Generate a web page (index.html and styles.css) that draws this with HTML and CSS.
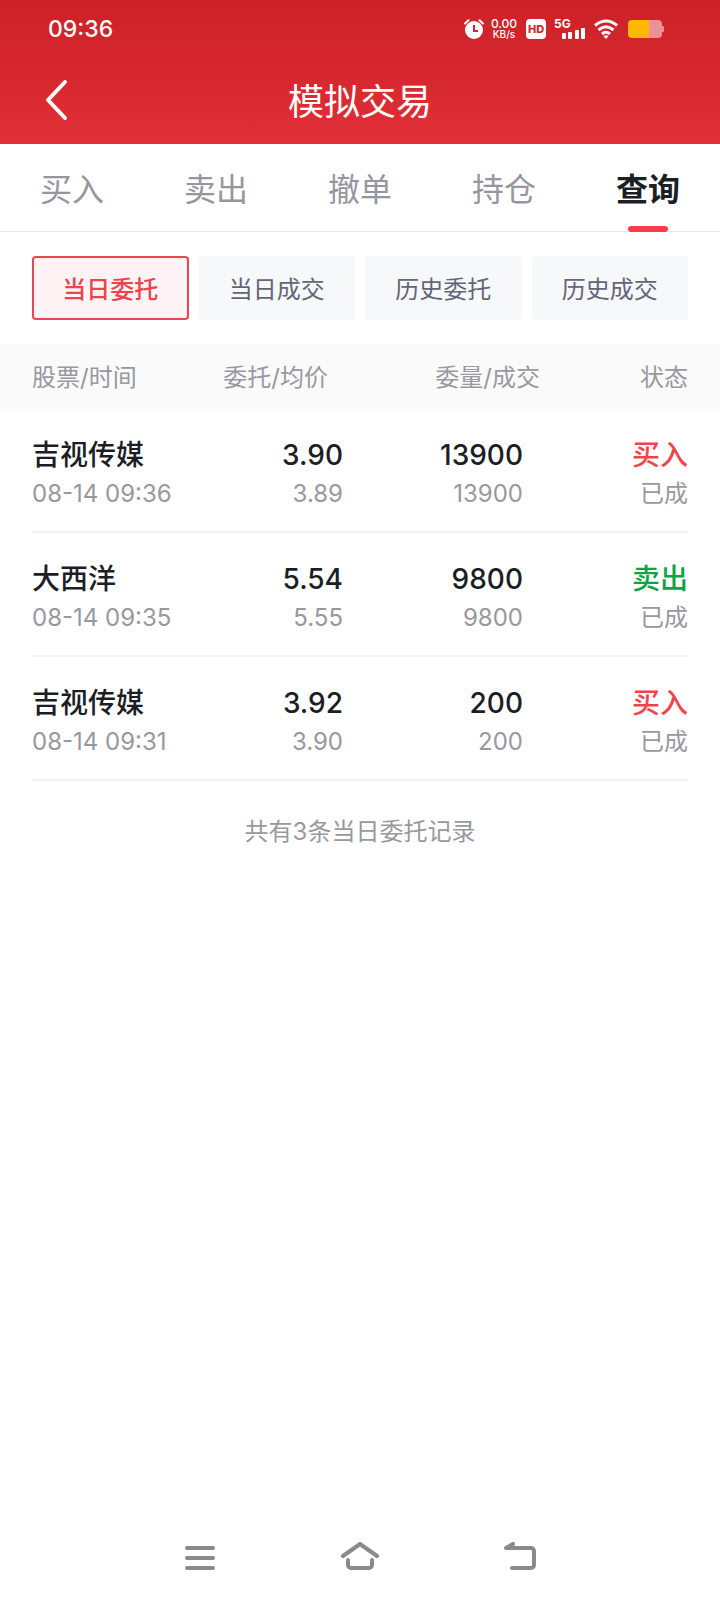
FILE: index.html
```html
<!DOCTYPE html>
<html lang="zh-CN">
<head>
<meta charset="utf-8">
<meta name="viewport" content="width=device-width, initial-scale=1">
<title>模拟交易</title>
<link rel="stylesheet" href="styles.css">
</head>
<body>
<div class="app">
  <header class="header">
    <div class="status-bar">
      <time class="clock">09:36</time>
      <div class="indicators">
        <svg width="20" height="20" viewBox="0 0 20 20" aria-hidden="true">
          <circle cx="10" cy="11" r="9" fill="#fff"/>
          <path d="M1 4.5L4.5 1.2M19 4.5L15.500 1.200" stroke="#fff" stroke-width="2" stroke-linecap="round"/>
          <path d="M10 6v6h4" fill="none" stroke="#d22730" stroke-width="2"/>
        </svg>
        <div class="speed"><span class="speed-value">0.00</span><span class="speed-unit">KB/s</span></div>
        <span class="hd">HD</span>
        <div class="signal">
          <span class="network">5G</span>
          <svg class="bars" width="24" height="12" viewBox="0 0 24 12" fill="#fff" aria-hidden="true">
            <rect x="0" y="6" width="4" height="6" rx="1"/><rect x="6" y="5" width="4" height="7" rx="1"/><rect x="13" y="3" width="4" height="9" rx="1"/><rect x="19" y="1" width="4" height="11" rx="1"/>
          </svg>
        </div>
        <svg class="wifi" width="24" height="20" viewBox="0 0 24 20" fill="none" stroke="#fff" stroke-width="3" aria-hidden="true">
          <path d="M1 6.500Q12-2.500 23 6.500M4.500 11Q12 4.500 19.500 11M8 15Q12 11.500 16 15"/>
          <path d="M9.500 17Q12 15.500 14.500 17L12 20z" fill="#fff" stroke="none"/>
        </svg>
        <svg class="battery" width="36" height="18" viewBox="0 0 36 18" aria-hidden="true">
          <path d="M21 0h9a4 4 0 0 1 4 4v2h1a1 1 0 0 1 1 1v4a1 1 0 0 1-1 1h-1v2a4 4 0 0 1-4 4h-9z" fill="#ea929a"/>
          <path d="M4 0h17v18H4a4 4 0 0 1-4-4V4a4 4 0 0 1 4-4z" fill="#ffb800"/>
        </svg>
      </div>
    </div>
    <div class="title-bar">
      <button class="back" type="button" aria-label="返回">
        <svg width="24" height="42" viewBox="0 0 24 42" fill="none" stroke="#fff" stroke-width="4" stroke-linecap="round" stroke-linejoin="round"><path d="M21 3L4 21l17 18"/></svg>
      </button>
      <h1 class="title">模拟交易</h1>
    </div>
  </header>

  <nav class="tabs">
    <button class="tab" type="button">买入</button>
    <button class="tab" type="button">卖出</button>
    <button class="tab" type="button">撤单</button>
    <button class="tab" type="button">持仓</button>
    <button class="tab tab-active" type="button" aria-current="page">查询</button>
  </nav>

  <main class="content">
    <div class="filters">
      <button class="filter filter-active" type="button" aria-pressed="true">当日委托</button>
      <button class="filter" type="button">当日成交</button>
      <button class="filter" type="button">历史委托</button>
      <button class="filter" type="button">历史成交</button>
    </div>

    <table class="orders">
      <thead class="orders-head">
        <tr class="head-row"><th>股票/时间</th><th>委托/均价</th><th>委量/成交</th><th>状态</th></tr>
      </thead>
      <tbody>
        <tr class="order">
          <td><div class="name">吉视传媒</div><div class="sub">08-14 09:36</div></td>
          <td><div class="main">3.90</div><div class="sub">3.89</div></td>
          <td><div class="main">13900</div><div class="sub">13900</div></td>
          <td><div class="name buy">买入</div><div class="sub">已成</div></td>
        </tr>
        <tr class="order">
          <td><div class="name">大西洋</div><div class="sub">08-14 09:35</div></td>
          <td><div class="main">5.54</div><div class="sub">5.55</div></td>
          <td><div class="main">9800</div><div class="sub">9800</div></td>
          <td><div class="name sell">卖出</div><div class="sub">已成</div></td>
        </tr>
        <tr class="order">
          <td><div class="name">吉视传媒</div><div class="sub">08-14 09:31</div></td>
          <td><div class="main">3.92</div><div class="sub">3.90</div></td>
          <td><div class="main">200</div><div class="sub">200</div></td>
          <td><div class="name buy">买入</div><div class="sub">已成</div></td>
        </tr>
      </tbody>
    </table>
    <p class="summary">共有3条当日委托记录</p>
  </main>

  <footer class="system-nav">
    <button class="system-button" type="button" aria-label="最近任务">
      <svg width="40" height="32" viewBox="0 0 40 32"><path d="M7 6h26M7 16h26M7 26h26"/></svg>
    </button>
    <button class="system-button" type="button" aria-label="主屏幕">
      <svg width="40" height="32" viewBox="0 0 40 32"><path d="M3 14L20 2L37 14M8 18v5a3 3 0 0 0 3 3h18a3 3 0 0 0 3-3v-5"/></svg>
    </button>
    <button class="system-button" type="button" aria-label="返回上一级">
      <svg width="40" height="32" viewBox="0 0 40 32"><path d="M12 26h19a3 3 0 0 0 3-3V9a3 3 0 0 0-3-3H6l7-4"/></svg>
    </button>
  </footer>
</div>
</body>
</html>
```
FILE: styles.css
```css
* {
  box-sizing: border-box;
}

body {
  margin: 0;
  background: #fff;
  color: #1c1e26;
  font-family: Inter, "Noto Sans CJK SC", sans-serif;
}

button {
  margin: 0;
  padding: 0;
  border: 0;
  background: none;
  color: inherit;
  font: inherit;
}

svg {
  display: block;
}

.app {
  display: flex;
  flex-direction: column;
  min-height: 100vh;
}

.header {
  background: linear-gradient(#cd2027, #e12f36);
  color: #fff;
}

.status-bar {
  display: flex;
  align-items: center;
  justify-content: space-between;
  height: 56px;
  padding: 2px 56px 0 48px;
}

.clock {
  font-size: 23px;
  font-weight: 500;
}

.indicators {
  display: flex;
  align-items: center;
}

.speed {
  display: flex;
  flex-direction: column;
  align-items: center;
  width: 28px;
  margin: 0 8px 0 6px;
  font-weight: 500;
  line-height: 10px;
}

.speed-value {
  font-size: 12px;
}

.speed-unit {
  font-size: 10px;
}

.hd {
  width: 20px;
  border-radius: 4px;
  background: #fff;
  color: #d22730;
  font-size: 11px;
  font-weight: 800;
  line-height: 20px;
  text-align: center;
}

.signal {
  display: flex;
  flex-direction: column;
  width: 32px;
  margin: 0 8px;
}

.network {
  height: 8px;
  font-size: 12px;
  font-weight: 700;
  line-height: 10px;
}

.bars {
  align-self: flex-end;
}

.battery {
  margin-left: 10px;
}

.title-bar {
  display: grid;
  grid-template-columns: 1fr auto 1fr;
  align-items: center;
  height: 88px;
  padding: 0 44px;
}

.back {
  justify-self: start;
}

.title {
  margin: 0;
  padding-top: 4px;
  font-size: 36px;
  font-weight: 400;
  line-height: 52px;
}

.tabs {
  display: grid;
  grid-template-columns: repeat(5, 1fr);
  height: 88px;
  border-bottom: 1px solid #e6e6e8;
}

.tab {
  position: relative;
  padding-bottom: 2px;
  color: #96969f;
  font-size: 32px;
}

.tab-active {
  color: #1c1e26;
  font-weight: 700;
}

.tab-active::after {
  position: absolute;
  bottom: -1px;
  left: 50%;
  width: 40px;
  height: 6px;
  margin-left: -20px;
  border-radius: 3px;
  background: #fc3f47;
  content: "";
}

.content {
  flex: 1;
}

.filters {
  display: grid;
  grid-template-columns: repeat(4, 1fr);
  gap: 10px;
  padding: 24px 32px;
}

.filter {
  height: 64px;
  padding-bottom: 2px;
  border-radius: 4px;
  background: #f7f8fa;
  color: #646579;
  font-size: 24px;
}

.filter-active {
  border: 2px solid #e8474f;
  background: #fff3f5;
  color: #ea444c;
  font-weight: 500;
}

.orders,
.orders tbody,
.orders-head {
  display: block;
}

.orders-head {
  padding: 3px 32px 0;
  background: #fafafb;
  color: #98989f;
  font-size: 24px;
  line-height: 62px;
}

.head-row,
.order {
  display: grid;
}

.head-row {
  grid-template-columns: 180fr 116fr 212fr 148fr;
}

.order {
  grid-template-columns: 180fr 131fr 180fr 165fr;
  margin: 0 32px;
  padding: 26px 0 18px;
  border-bottom: 2px solid #f3f3f5;
}

.orders th,
.orders td {
  padding: 0;
  font-weight: 400;
  text-align: right;
  white-space: nowrap;
}

.orders th:first-child,
.orders td:first-child {
  text-align: left;
}

.orders .name,
.orders .main {
  font-size: 28px;
  font-weight: 500;
  line-height: 40px;
}

.sub {
  color: #98989f;
  font-size: 24px;
  line-height: 38px;
}

.buy {
  color: #f0444c;
}

.sell {
  color: #0ba544;
}

.summary {
  margin: 33px 0 0;
  color: #98989f;
  font-size: 24px;
  line-height: 36px;
  text-align: center;
}

.system-nav {
  display: flex;
  justify-content: center;
  gap: 120px;
  padding: 24px 0 26px;
}

.system-button svg {
  fill: none;
  stroke: #8a8a8a;
  stroke-width: 4;
  stroke-linecap: round;
  stroke-linejoin: round;
}
```
